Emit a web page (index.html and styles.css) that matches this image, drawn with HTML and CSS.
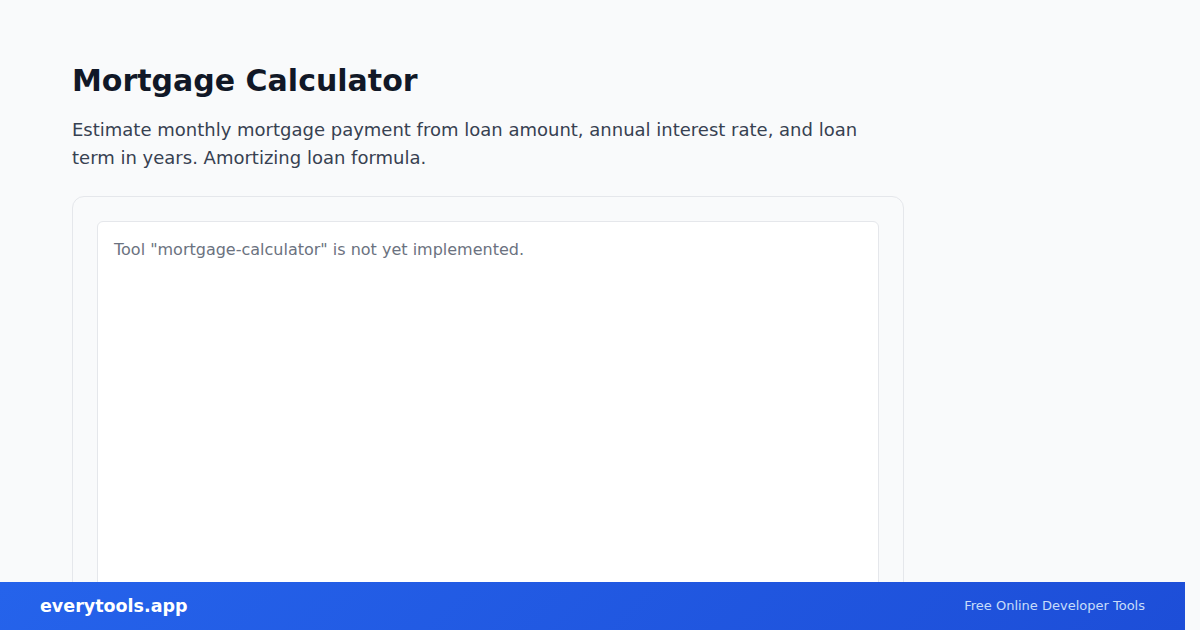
FILE: index.html
```html
<!DOCTYPE html>
<html lang="en">
<head>
    <meta charset="UTF-8">
    <meta name="viewport" content="width=device-width, initial-scale=1.0">
    <title>Mortgage Calculator - everytools.app</title>
    <link rel="stylesheet" href="styles.css">
</head>
<body>

<main class="page">
    <h1 class="tool-title">Mortgage Calculator</h1>
    <p class="tool-description">Estimate monthly mortgage payment from loan amount, annual interest rate, and loan term in years. Amortizing loan formula.</p>

    <div class="tool-card">
        <div class="tool-body">
            <p class="placeholder">Tool "mortgage-calculator" is not yet implemented.</p>
        </div>
    </div>
</main>

<footer class="site-footer">
    <span class="brand">everytools.app</span>
    <span class="tagline">Free Online Developer Tools</span>
</footer>

</body>
</html>
```

FILE: styles.css
```css
html, body {
    margin: 0;
    padding: 0;
}
body {
    font-family: "DejaVu Sans", sans-serif;
    background-color: #f9fafb;
    color: #111827;
}
.page {
    max-width: 896px;
    margin-left: 40px;
    padding: 63px 32px 80px;
    box-sizing: border-box;
}
.tool-title {
    font-size: 30px;
    line-height: 36px;
    font-weight: bold;
    margin: 0 0 17px;
    color: #111827;
}
.tool-description {
    font-size: 18px;
    line-height: 28px;
    color: #374151;
    margin: 0 0 24px;
}
.tool-card {
    border: 1px solid #e5e7eb;
    border-radius: 12px;
    padding: 24px;
    background-color: #f9fafb;
}
.tool-body {
    background-color: white;
    border: 1px solid #e5e7eb;
    border-radius: 6px;
    padding: 16px;
    min-height: 420px;
}
.placeholder {
    margin: 0;
    font-size: 16px;
    line-height: 24px;
    color: #6b7280;
}
.site-footer {
    position: fixed;
    left: 0;
    right: 15px;
    bottom: 0;
    height: 48px;
    display: flex;
    align-items: center;
    justify-content: space-between;
    padding: 0 40px;
    background: linear-gradient(135deg, #2563eb, #1d4ed8);
    color: white;
}
.brand {
    font-size: 17.5px;
    font-weight: bold;
}
.tagline {
    font-size: 13px;
    color: #dbeafe;
    opacity: 0.9;
    margin-bottom: 2px;
}
```
